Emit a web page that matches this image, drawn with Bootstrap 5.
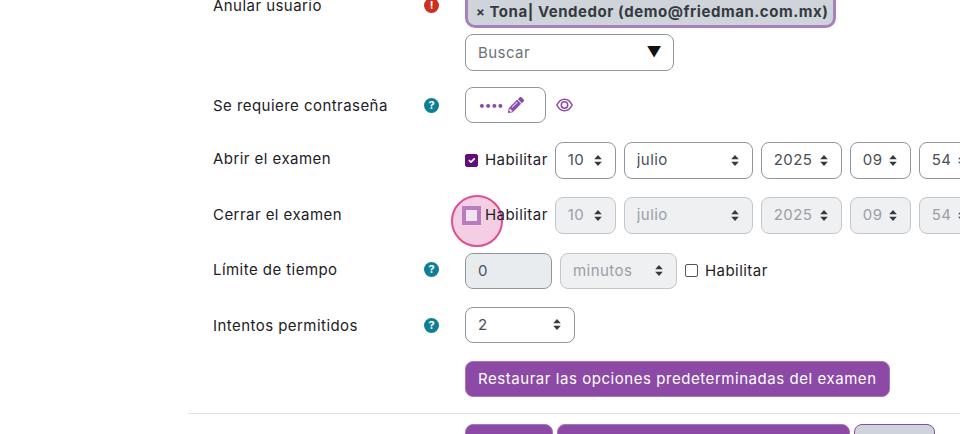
<!DOCTYPE html>
<html lang="es">
<head>
<meta charset="UTF-8" />
<title>Ajustes del examen</title>
<link rel="stylesheet" href="https://cdn.jsdelivr.net/npm/bootstrap@5.3.0/dist/css/bootstrap.min.css" />
<style>
  html, body { height: 434px; overflow: hidden; }
  body { font-family: "Inter", "Liberation Sans", sans-serif; font-size: 15px; color: #1d2125; background: #fff; }
  .quiz-form { margin-top: -8px; padding-left: 188px; width: 1100px; }
  .field-row { display: flex; margin-bottom: 18.5px; }
  .row-user { margin-bottom: 16.5px; }
  .row-pass { margin-bottom: 19px; }
  .row-limit { margin-top: 19px; margin-bottom: 17.5px; }
  .field-label { width: 277px; flex: none; padding-left: 25px; padding-right: 26px; display: flex; justify-content: space-between; padding-top: 6px; }
  .label-user { padding-top: 3px; }
  .label-pass { padding-top: 2px; }
  .label-low { padding-top: 7px; }
  .label-lower { padding-top: 8px; }
  .field-label .txt { letter-spacing: .45px; }
  .hint { width: 15px; height: 15px; border-radius: 50%; color: #fff; font-size: 11px; font-weight: 700; line-height: 15px; text-align: center; margin-top: 3px; }
  .hint-info { background: #0f7f96; }
  .hint-req { background: #ca3120; }
  .form-select, .form-control { height: 36.5px; border-color: #8f959e; border-radius: 8px; font-size: 15px; color: #495057; padding: 6px 12px; letter-spacing: .45px; }
  .form-select { background-image: url("data:image/svg+xml,%3Csvg xmlns='http://www.w3.org/2000/svg' width='8' height='11'%3E%3Cpath d='M4 0l3.8 4.2H.2zM4 11L.2 6.8h7.6z' fill='%23343a40'/%3E%3C/svg%3E"); background-size: 8px 11px; background-position: right 13px center; padding-right: 24px; }
  .form-select:disabled { background-color: #eff0f2; color: #9a9fa5; border-color: #c3c6cb; opacity: 1; }
  .form-control:disabled { background-color: #e9ecef; }
  .w-61 { width: 61px; flex: none; }
  .w-129 { width: 129px; flex: none; }
  .w-81 { width: 81px; flex: none; }
  .w-87 { width: 87px; flex: none; }
  .w-110 { width: 110px; flex: none; }
  .w-117 { width: 117px; flex: none; }
  .user-tag { width: 371px; height: 44px; margin-top: -8px; border: 3px solid #a97fbc; border-radius: 10px; background: #ced4da; font-weight: 700; padding: 14px 0 0 8px; color: #343a40; letter-spacing: .55px; white-space: nowrap; }
  .user-tag .x { font-size: 13px; margin-right: 4px; }
  .search-box { width: 209px; height: 36.5px; border: 1px solid #8f959e; border-radius: 8px; padding: 7px 11px 0 12px; color: #6a737b; display: flex; justify-content: space-between; margin-top: 6px; letter-spacing: .45px; }
  .search-box i { font-style: normal; color: #111; font-size: 15px; line-height: 20px; }
  .pw-box { width: 81px; height: 36px; border: 1px solid #8f959e; border-radius: 8px; display: flex; align-items: center; padding-left: 13px; gap: 4px; color: #8c4aa6; }
  .pw-dots { font-size: 12px; font-weight: 700; letter-spacing: .5px; }
  .eye-icon { margin-left: 10px; }
  .enable-check { display: flex; align-items: center; gap: 7px; margin-right: -1px; letter-spacing: .45px; white-space: nowrap; }
  .enable-check .form-check-input { width: 13px; height: 13px; margin: 0; border-color: #555; border-radius: 2px; flex: none; }
  .enable-check .form-check-input:checked { background-color: #5f0f78; border-color: #5f0f78; }
  .ring-wrap { position: relative; }
  .focus-box { width: 19px; height: 19px; margin-left: -3px; margin-right: -3px; margin-top: 1px; border: 4px solid #b87cc0; background: #f3e3ee; position: relative; z-index: 2; flex: none; }
  .focus-halo { position: absolute; left: -14px; top: -2px; width: 52px; height: 52px; border-radius: 50%; border: 2px solid #dc4f96; background: #f4cfe3; z-index: 1; }
  .enable-check .lbl { position: relative; z-index: 2; }
  .btn-quiz { background: #8c4aa6; border: 1px solid #a774bd; color: #fff; border-radius: 8px; height: 36.5px; font-size: 15px; padding: 6px 12px; letter-spacing: .55px; white-space: nowrap; }
  .btn-quiz:hover { background: #7c3f95; color: #fff; }
  .btn-grey { background: #ced4da; border-color: #8c4aa6; color: #1d2125; }
  .btn-save { width: 88px; }
  .btn-save-show { width: 293px; }
  .btn-cancel { width: 81px; }
  .form-sep { border-top: 1px solid #dee2e6; opacity: 1; margin: 15.5px 0 10px; }
</style>
</head>
<body>
<form class="quiz-form">

  <div class="field-row row-user">
    <div class="field-label label-user"><span class="txt">Anular usuario</span><span class="hint hint-req">!</span></div>
    <div>
      <div class="user-tag"><span class="x">×</span>Tona| Vendedor (demo@friedman.com.mx)</div>
      <div class="search-box"><span>Buscar</span><i>▼</i></div>
    </div>
  </div>

  <div class="field-row row-pass align-items-center">
    <div class="field-label label-pass"><span class="txt">Se requiere contraseña</span><span class="hint hint-info">?</span></div>
    <div class="pw-box">
      <span class="pw-dots">••••</span>
      <svg width="16" height="16" viewBox="0 0 512 512" fill="#8c4aa6"><path d="M497.9 142.1l-46.1 46.1c-4.7 4.7-12.3 4.7-17 0l-111-111c-4.7-4.7-4.7-12.3 0-17l46.1-46.1c18.7-18.7 49.1-18.7 67.9 0l60.1 60.1c18.8 18.7 18.8 49.1 0 67.9zM284.2 99.8L21.6 362.4.4 483.9c-2.9 16.4 11.4 30.6 27.8 27.8l121.5-21.3 262.6-262.6c4.7-4.7 4.7-12.3 0-17l-111-111c-4.8-4.7-12.4-4.7-17.1 0zM124.1 339.9c-5.5-5.5-5.5-14.3 0-19.8l154-154c5.5-5.5 14.3-5.5 19.8 0s5.5 14.3 0 19.8l-154 154c-5.5 5.5-14.3 5.5-19.8 0zM88 424h48v36.3l-64.5 11.3-31.1-31.1L51.7 376H88v48z"/></svg>
    </div>
    <svg class="eye-icon" width="17" height="14" viewBox="0 0 17 14" fill="none" stroke="#8c4aa6" stroke-width="1.5"><path d="M.9 7C2.6 3.5 5.3 1.2 8.5 1.2S14.4 3.5 16.1 7c-1.7 3.5-4.4 5.8-7.6 5.8S2.6 10.5.9 7z"/><circle cx="8.5" cy="7" r="3.2"/></svg>
  </div>

  <div class="field-row">
    <div class="field-label"><span class="txt">Abrir el examen</span></div>
    <div class="d-flex gap-2 flex-nowrap">
      <label class="enable-check"><input class="form-check-input" type="checkbox" checked /> <span class="lbl">Habilitar</span></label>
      <select class="form-select w-61"><option>10</option></select>
      <select class="form-select w-129"><option>julio</option></select>
      <select class="form-select w-81"><option>2025</option></select>
      <select class="form-select w-61"><option>09</option></select>
      <select class="form-select w-61"><option>54</option></select>
    </div>
  </div>

  <div class="field-row mb-0">
    <div class="field-label label-low"><span class="txt">Cerrar el examen</span></div>
    <div class="d-flex gap-2 flex-nowrap">
      <label class="enable-check ring-wrap"><span class="focus-halo"></span><span class="focus-box"></span><span class="lbl">Habilitar</span></label>
      <select class="form-select w-61" disabled><option>10</option></select>
      <select class="form-select w-129" disabled><option>julio</option></select>
      <select class="form-select w-81" disabled><option>2025</option></select>
      <select class="form-select w-61" disabled><option>09</option></select>
      <select class="form-select w-61" disabled><option>54</option></select>
    </div>
  </div>

  <div class="field-row row-limit">
    <div class="field-label"><span class="txt">Límite de tiempo</span><span class="hint hint-info">?</span></div>
    <div class="d-flex gap-2 flex-nowrap">
      <input class="form-control w-87" type="text" value="0" disabled />
      <select class="form-select w-117" disabled><option>minutos</option></select>
      <label class="enable-check"><input class="form-check-input" type="checkbox" /> <span class="lbl">Habilitar</span></label>
    </div>
  </div>

  <div class="field-row row-limit mt-0">
    <div class="field-label label-lower"><span class="txt">Intentos permitidos</span><span class="hint hint-info">?</span></div>
    <select class="form-select w-110"><option>2</option></select>
  </div>

  <div class="field-row mb-0">
    <div class="field-label"></div>
    <button type="button" class="btn btn-quiz">Restaurar las opciones predeterminadas del examen</button>
  </div>

  <hr class="form-sep" />

  <div class="field-row mb-0">
    <div class="field-label"></div>
    <div class="d-flex gap-1">
      <button type="button" class="btn btn-quiz btn-save">Guardar</button>
      <button type="button" class="btn btn-quiz btn-save-show">Guardar cambios y mostrar</button>
      <button type="button" class="btn btn-quiz btn-grey btn-cancel">Cancelar</button>
    </div>
  </div>
</form>
<script src="https://cdn.jsdelivr.net/npm/bootstrap@5.3.0/dist/js/bootstrap.bundle.min.js"></script>
</body>
</html>
